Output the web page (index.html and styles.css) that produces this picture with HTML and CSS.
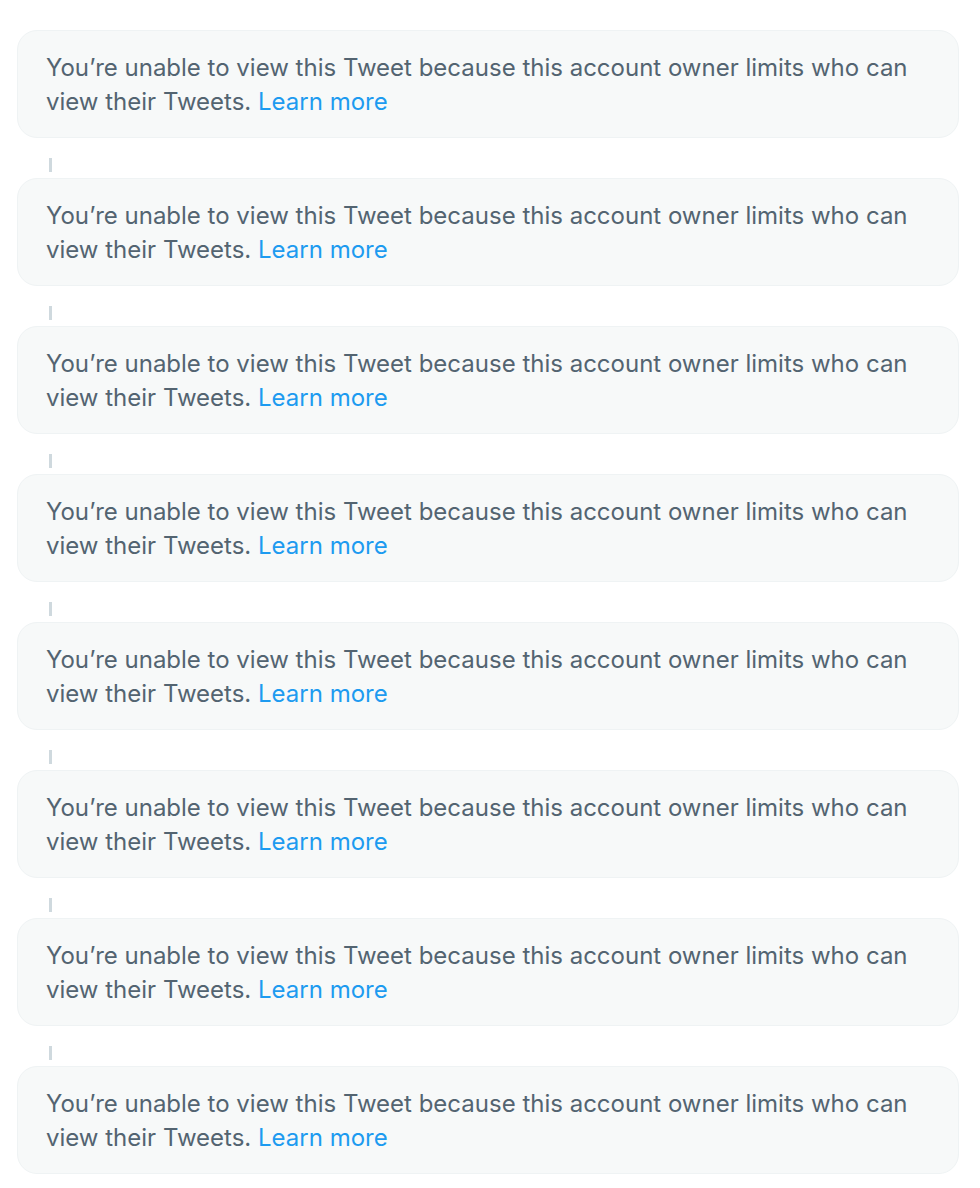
FILE: index.html
```html
<!DOCTYPE html>
<html>
<head>
<meta charset="utf-8">
<link rel="stylesheet" href="styles.css">
</head>
<body>
<div class="thread">
  <div class="notice"><p>You’re unable to view this Tweet because this account owner limits who can view their Tweets. <a href="#">Learn more</a></p></div>
  <div class="connector"><span class="line"></span></div>
  <div class="notice"><p>You’re unable to view this Tweet because this account owner limits who can view their Tweets. <a href="#">Learn more</a></p></div>
  <div class="connector"><span class="line"></span></div>
  <div class="notice"><p>You’re unable to view this Tweet because this account owner limits who can view their Tweets. <a href="#">Learn more</a></p></div>
  <div class="connector"><span class="line"></span></div>
  <div class="notice"><p>You’re unable to view this Tweet because this account owner limits who can view their Tweets. <a href="#">Learn more</a></p></div>
  <div class="connector"><span class="line"></span></div>
  <div class="notice"><p>You’re unable to view this Tweet because this account owner limits who can view their Tweets. <a href="#">Learn more</a></p></div>
  <div class="connector"><span class="line"></span></div>
  <div class="notice"><p>You’re unable to view this Tweet because this account owner limits who can view their Tweets. <a href="#">Learn more</a></p></div>
  <div class="connector"><span class="line"></span></div>
  <div class="notice"><p>You’re unable to view this Tweet because this account owner limits who can view their Tweets. <a href="#">Learn more</a></p></div>
  <div class="connector"><span class="line"></span></div>
  <div class="notice"><p>You’re unable to view this Tweet because this account owner limits who can view their Tweets. <a href="#">Learn more</a></p></div>
</div>
</body>
</html>
```

FILE: styles.css
```css
html, body {
  margin: 0;
  padding: 0;
  background: #ffffff;
}

.thread {
  display: flex;
  flex-direction: column;
  width: 942px;
  padding: 30px 0 0 17px;
  font-family: Inter, "Noto Sans", sans-serif;
}

.notice {
  box-sizing: border-box;
  height: 108px;
  background: #f7f9f9;
  border: 1px solid #eff3f4;
  border-radius: 20px;
  padding: 20px 28px 18px;
}

.notice p {
  margin: 0;
  font-size: 24px;
  line-height: 34px;
  color: #536471;
}

.notice a {
  color: #1d9bf0;
  text-decoration: none;
}

.connector {
  height: 40px;
  display: flex;
  align-items: flex-start;
}

.line {
  display: block;
  width: 3px;
  height: 14px;
  margin: 20px 0 0 32px;
  background: #cfd9de;
}
```
